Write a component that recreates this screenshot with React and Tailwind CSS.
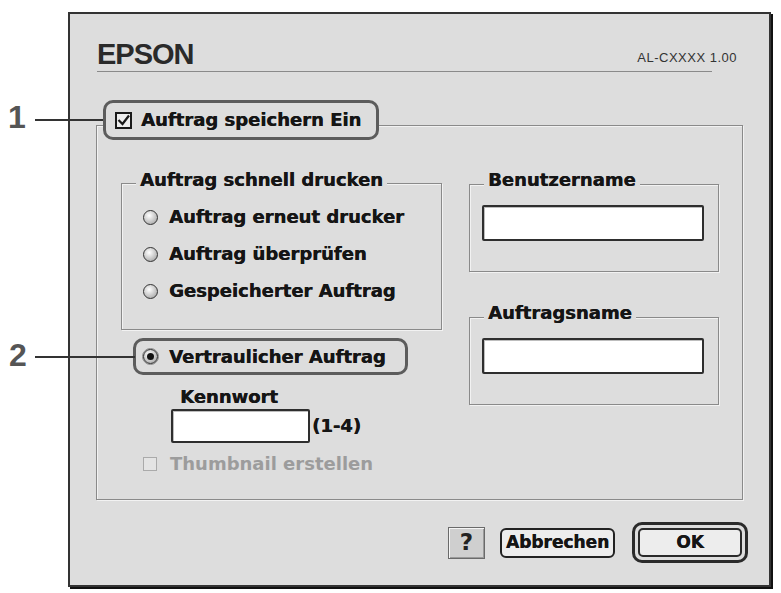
import React from "react";

const ui =
  "font-['DejaVu_Sans',sans-serif] font-bold text-[18px] leading-[18px] text-[#151515] [text-shadow:0.4px_0_0_#151515]";

function Radio({ checked = false }) {
  return (
    <span className="w-[15px] h-[15px] shrink-0 rounded-full border-[1.5px] border-[#333] bg-[radial-gradient(circle_at_40%_35%,#ffffff,#bdbdbd_65%,#8a8a8a)] flex items-center justify-center">
      {checked && <span className="w-[7px] h-[7px] rounded-full bg-[#111]" />}
    </span>
  );
}

function TextBox({ className = "" }) {
  return (
    <div
      className={
        "bg-white border-2 border-[#2e2e2e] rounded-[2px] shadow-[inset_1px_1px_0_#bdbdbd] " + className
      }
    />
  );
}

function GroupLegend({ children, className = "" }) {
  return (
    <div className={"w-fit ml-[14px] px-[4px] bg-[#dddddd] " + ui + " " + className}>{children}</div>
  );
}

export default function App() {
  return (
    <div className="relative w-[781px] h-[593px] bg-white overflow-hidden pt-[12px] pl-[68px]">
      {/* Dialog window */}
      <div className="w-[703px] h-[575px] border-2 border-[#333] bg-[#dddddd] shadow-[2px_2px_0_#111]">
        {/* Header */}
        <div className="h-[57px] pt-[26px] pl-[27px] pr-[32px] flex justify-between items-start">
          <span className="font-['Liberation_Sans',sans-serif] font-bold text-[29px] leading-none tracking-[-1px] text-[#2a2a2a]">
            EPSON
          </span>
          <span className="mt-[11px] font-['Liberation_Sans',sans-serif] text-[13px] leading-none tracking-[0.5px] text-[#333]">
            AL-CXXXX 1.00
          </span>
        </div>
        <div className="ml-[27px] mr-[57px] h-px bg-[#8a8a8a]" />

        {/* Outer group: Auftrag speichern */}
        <div className="ml-[26px] mt-[53px] w-[647px] h-[375px] border border-[#8a8a8a] shadow-[inset_1px_1px_0_#f2f2f2,1px_1px_0_#f2f2f2]">
          <div className="-mt-[26px] ml-[6px] w-[276px] h-[40px] rounded-[10px] border-[3px] border-[#5c5c5c] bg-[#dddddd] flex items-center pl-[9px] gap-[9px]">
            <svg width="17" height="17" viewBox="0 0 17 17" className="shrink-0">
              <rect x="1" y="1" width="15" height="15" fill="#eee" stroke="#1a1a1a" strokeWidth="2" />
              <path d="M3.5 8 L7.5 12 L14 3.5" fill="none" stroke="#1a1a1a" strokeWidth="2.2" />
            </svg>
            <span className={ui}>Auftrag speichern Ein</span>
          </div>

          <div className="mt-[43px] pl-[24px] flex items-start gap-[27px]">
            {/* Left column */}
            <div className="w-[321px]">
              <div className="h-[147px] border border-[#8a8a8a] shadow-[inset_1px_1px_0_#f2f2f2,1px_1px_0_#f2f2f2]">
                <GroupLegend className="-mt-[13px]">Auftrag schnell drucken</GroupLegend>
                <div className="mt-[18px] pl-[21px] flex flex-col gap-[17px]">
                  {["Auftrag erneut drucker", "Auftrag überprüfen", "Gespeicherter Auftrag"].map((t) => (
                    <div key={t} className="h-[20px] flex items-center gap-[11px]">
                      <Radio />
                      <span className={ui}>{t}</span>
                    </div>
                  ))}
                </div>
              </div>

              <div className="mt-[8px] ml-[12px] w-[275px] h-[37px] rounded-[10px] border-[3px] border-[#5c5c5c] flex items-center pl-[6px] gap-[10px]">
                <span className="w-[17px] h-[17px] rounded-full border border-[#888] flex items-center justify-center">
                  <Radio checked />
                </span>
                <span className={ui}>Vertraulicher Auftrag</span>
              </div>

              <div className={"mt-[13px] ml-[59px] " + ui}>Kennwort</div>
              <div className="mt-[3px] ml-[50px] flex items-center gap-[2px]">
                <TextBox className="w-[139px] h-[34px]" />
                <span className={ui}>(1-4)</span>
              </div>

              <div className="mt-[12px] ml-[22px] h-[18px] flex items-center gap-[13px]">
                <span className="w-[14px] h-[14px] border border-[#aaa] bg-[#e4e4e4]" />
                <span className="font-['DejaVu_Sans',sans-serif] font-bold text-[18px] leading-[18px] text-[#9c9c9c]">
                  Thumbnail erstellen
                </span>
              </div>
            </div>

            {/* Right column */}
            <div className="w-[250px] mt-[1px]">
              <div className="h-[88px] border border-[#8a8a8a] shadow-[inset_1px_1px_0_#f2f2f2,1px_1px_0_#f2f2f2]">
                <GroupLegend className="-mt-[14px]">Benutzername</GroupLegend>
                <TextBox className="mt-[16px] ml-[12px] w-[222px] h-[36px]" />
              </div>
              <div className="mt-[45px] h-[88px] border border-[#8a8a8a] shadow-[inset_1px_1px_0_#f2f2f2,1px_1px_0_#f2f2f2]">
                <GroupLegend className="-mt-[14px]">Auftragsname</GroupLegend>
                <TextBox className="mt-[16px] ml-[12px] w-[222px] h-[36px]" />
              </div>
            </div>
          </div>
        </div>

        {/* Buttons */}
        <div className="mt-[22px] pr-[21px] flex justify-end items-center">
          <button className="w-[37px] h-[32px] border border-[#6a6a6a] bg-[#cfcfcf] shadow-[inset_1px_1px_0_#f5f5f5,inset_-1px_-1px_0_#9a9a9a] flex items-center justify-center font-['DejaVu_Sans',sans-serif] font-bold text-[23px] leading-none text-[#222]">
            ?
          </button>
          <button className="ml-[15px] w-[115px] h-[30px] rounded-[6px] border-2 border-[#222] bg-[#ededed] flex items-center justify-center font-['DejaVu_Sans',sans-serif] font-bold text-[17px] leading-none text-[#151515] [text-shadow:0.4px_0_0_#151515]">
            Abbrechen
          </button>
          <div className="ml-[17px] w-[116px] h-[41px] rounded-[10px] border-[3px] border-[#2a2a2a] p-[3px]">
            <button className="w-full h-full rounded-[5px] border-2 border-[#2a2a2a] bg-[#ededed] flex items-center justify-center font-['DejaVu_Sans',sans-serif] font-bold text-[17px] leading-none text-[#151515] [text-shadow:0.4px_0_0_#151515]">
              OK
            </button>
          </div>
        </div>
      </div>

      {/* Callouts */}
      <span className="absolute left-[8px] top-[101px] font-['Liberation_Sans',sans-serif] font-bold text-[32px] leading-none text-[#555]">
        1
      </span>
      <div className="absolute left-[35px] top-[119px] w-[68px] h-[2px] bg-[#333]" />
      <span className="absolute left-[9px] top-[339px] font-['Liberation_Sans',sans-serif] font-bold text-[32px] leading-none text-[#555]">
        2
      </span>
      <div className="absolute left-[35px] top-[356px] w-[100px] h-[2px] bg-[#333]" />
    </div>
  );
}
